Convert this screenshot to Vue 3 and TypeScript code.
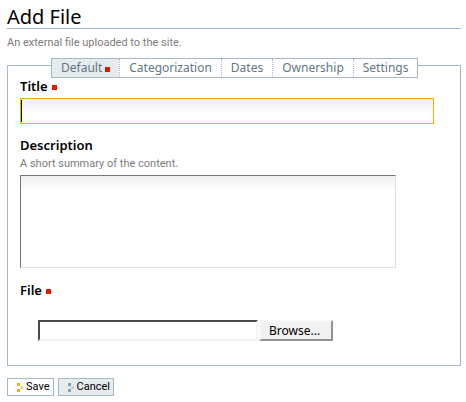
<script setup lang="ts">
import { ref } from 'vue'

interface Tab {
  id: string
  label: string
  required?: boolean
}

const tabs: Tab[] = [
  { id: 'default', label: 'Default', required: true },
  { id: 'categorization', label: 'Categorization' },
  { id: 'dates', label: 'Dates' },
  { id: 'ownership', label: 'Ownership' },
  { id: 'settings', label: 'Settings' },
]

const active = ref('default')
const title = ref('')
const description = ref('')
const fileName = ref('')
const picker = ref<HTMLInputElement | null>(null)

function pick(event: Event) {
  const input = event.target as HTMLInputElement
  fileName.value = input.files?.[0]?.name ?? ''
}
</script>

<template>
  <main class="page">
    <h1 class="heading">Add File</h1>
    <p class="lead">An external file uploaded to the site.</p>

    <form @submit.prevent>
      <div class="panel">
        <div class="tabs" role="tablist">
          <button
            v-for="tab in tabs"
            :key="tab.id"
            type="button"
            role="tab"
            class="tab"
            :class="{ selected: tab.id === active }"
            :aria-selected="tab.id === active"
            @click="active = tab.id"
          >
            {{ tab.label }}<span v-if="tab.required" class="required"></span>
          </button>
        </div>

        <div class="field">
          <label class="label" for="title">Title<span class="required"></span></label>
          <div class="title-box">
            <input id="title" v-model="title" class="title-input" type="text" />
            <span v-if="!title" class="caret"></span>
          </div>
        </div>

        <div class="field description">
          <label class="label" for="description">Description</label>
          <p class="help">A short summary of the content.</p>
          <textarea id="description" v-model="description" class="text-area"></textarea>
        </div>

        <div class="field file">
          <label class="label" for="file">File<span class="required"></span></label>
          <div class="file-row">
            <input id="file" class="file-name" type="text" readonly :value="fileName" />
            <button type="button" class="browse" @click="picker?.click()">Browse...</button>
            <input ref="picker" type="file" hidden @change="pick" />
          </div>
        </div>
      </div>

      <div class="actions">
        <button type="submit" class="action save">
          <svg class="mark" viewBox="0 0 6 9" width="6" height="9" aria-hidden="true">
            <path class="dark" d="M0 0h3v3H0zM0 6h3v3H0z" />
            <path class="light" d="M3 3h3v3H3z" />
          </svg>
          Save
        </button>
        <button type="button" class="action cancel">
          <svg class="mark" viewBox="0 0 6 9" width="6" height="9" aria-hidden="true">
            <path class="dark" d="M0 0h3v3H0zM0 6h3v3H0z" />
            <path class="light" d="M3 3h3v3H3z" />
          </svg>
          Cancel
        </button>
      </div>
    </form>
  </main>
</template>

<style>
body {
  margin: 0;
  background: #fff;
}
</style>

<style scoped>
.page {
  padding: 4px 5px 6px 7px;
  color: #000;
  font-family: 'Noto Sans', 'Open Sans', sans-serif;
  font-size: 12px;
  line-height: 16px;
}

.page * {
  box-sizing: border-box;
}

button,
input,
textarea {
  margin: 0;
  border-radius: 0;
  font: inherit;
  color: inherit;
  outline: none;
}

.heading {
  margin: 0;
  padding-top: 1px;
  border-bottom: 1px solid #a5b9c6;
  font-size: 20px;
  font-weight: 400;
  line-height: 23px;
}

.lead,
.help {
  margin: 0;
  color: #7c7c7c;
  font-family: Roboto, 'Noto Sans', sans-serif;
  font-size: 11px;
  line-height: 16px;
}

.lead {
  margin-top: 6px;
}

.panel {
  margin-top: 14px;
  padding: 0 12px 24px;
  border: 1px solid #a5b9c6;
}

.tabs {
  display: flex;
  width: max-content;
  height: 20px;
  margin: -8px 0 0 31px;
  border: 1px solid #a5b9c6;
  background: #fff;
}

.tab {
  display: flex;
  align-items: center;
  padding: 0 9px;
  border: 0;
  border-left: 1px dotted #a5b9c6;
  background: transparent;
  color: #5f7685;
}

.tab:first-child {
  border-left: 0;
}

.tab.selected {
  background: #e6ebee;
}

.required {
  display: inline-block;
  width: 5px;
  height: 5px;
  margin-left: 4px;
  background: #dd1a00;
}

.tab .required {
  margin-left: 3px;
  margin-top: 2px;
}

.label {
  display: block;
  padding-bottom: 2px;
  font-size: 13px;
  font-weight: 600;
  line-height: 14px;
}

.label .required {
  margin-bottom: 1px;
}

.field {
  padding-top: 1px;
}

.title-box {
  position: relative;
  margin: 3px 14px 0 0;
  border: 1px solid #efb100;
}

.title-input {
  display: block;
  width: 100%;
  height: 24px;
  padding: 0 4px;
  border: 0;
  background: linear-gradient(#efefef, #fff 14px);
}

.caret {
  position: absolute;
  top: 1px;
  left: 0;
  width: 1px;
  height: 22px;
  background: #000;
}

.description {
  margin-top: 13px;
}

.help {
  margin-top: 2px;
}

.text-area {
  display: block;
  width: calc(100% - 52px);
  height: 93px;
  margin-top: 3px;
  padding: 4px;
  border: 1px solid;
  border-color: #777 #dfdfdf #dfdfdf #777;
  background: linear-gradient(#efefef, #fff 14px);
  resize: none;
}

.file {
  margin-top: 14px;
}

.file-row {
  display: flex;
  gap: 1px;
  margin: 21px 0 0 18px;
}

.file-name {
  width: 220px;
  height: 21px;
  padding: 0 4px;
  border: 2px solid;
  border-color: #4a4a4a #f3f3f3 #f3f3f3 #4a4a4a;
  background: #fff;
}

.browse {
  height: 21px;
  padding: 0 11px 0 8px;
  border: 2px solid;
  border-color: #f8f8f8 #929292 #929292 #f8f8f8;
  background: #f1f1f1;
  line-height: 16px;
}

.actions {
  display: flex;
  gap: 4px;
  margin-top: 12px;
}

.action {
  display: flex;
  align-items: center;
  gap: 3px;
  height: 18px;
  padding: 0 3px 0 9px;
  border: 1px solid #a5b9c6;
  background: #fff;
  font-family: Roboto, 'Noto Sans', sans-serif;
  font-size: 11px;
}

.cancel {
  background: #e6ebee;
}

.save .dark {
  fill: #efb100;
}

.save .light {
  fill: #f2d894;
}

.cancel .dark {
  fill: #86a1b0;
}

.cancel .light {
  fill: #c5d0d6;
}
</style>
